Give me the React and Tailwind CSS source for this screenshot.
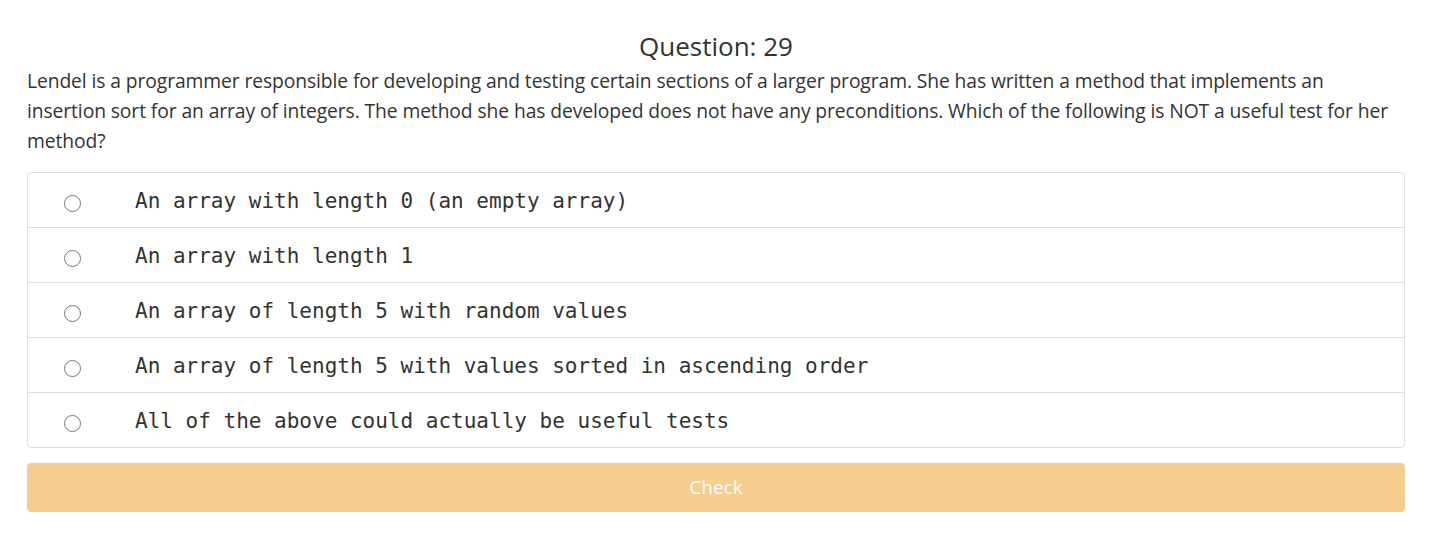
import React from "react";

const options = [
  "An array with length 0 (an empty array)",
  "An array with length 1",
  "An array of length 5 with random values",
  "An array of length 5 with values sorted in ascending order",
  "All of the above could actually be useful tests",
];

export default function App() {
  return (
    <div className="w-[1430px] h-[546px] bg-white pl-[27px] pr-[25px] pt-[28px] text-[#333333]" style={{ fontFamily: '"Open Sans", "Liberation Sans", sans-serif' }}>
      <h1 className="text-center text-[26px] leading-[36px] font-normal">Question: 29</h1>
      <p className="mt-[2px] text-[19.3px] leading-[30px] tracking-[-0.1px]">
        Lendel is a programmer responsible for developing and testing certain sections of a larger program. She has written a method that implements an insertion sort for an array of integers. The method she has developed does not have any preconditions. Which of the following is NOT a useful test for her method?
      </p>
      <div className="mt-[16px] border border-[#dddddd] rounded-[4px]">
        {options.map((o, i) => (
          <div key={i} className={`flex items-center ${i > 0 ? "h-[55px] border-t border-[#dddddd]" : "h-[54px]"}`}>
            <div className="pl-[36px] w-[107px] flex">
              <span className="block w-[17px] h-[17px] rounded-full border border-[#767676] bg-white mt-[6px]" />
            </div>
            <span className="mt-[4px] text-[21px] text-[#333333]" style={{ fontFamily: '"DejaVu Sans Mono", "Liberation Mono", monospace' }}>{o}</span>
          </div>
        ))}
      </div>
      <button className="mt-[15px] w-full h-[49px] rounded-[4px] bg-[#f4cd8f] text-white text-[19px] flex items-center justify-center">Check</button>
    </div>
  );
}
